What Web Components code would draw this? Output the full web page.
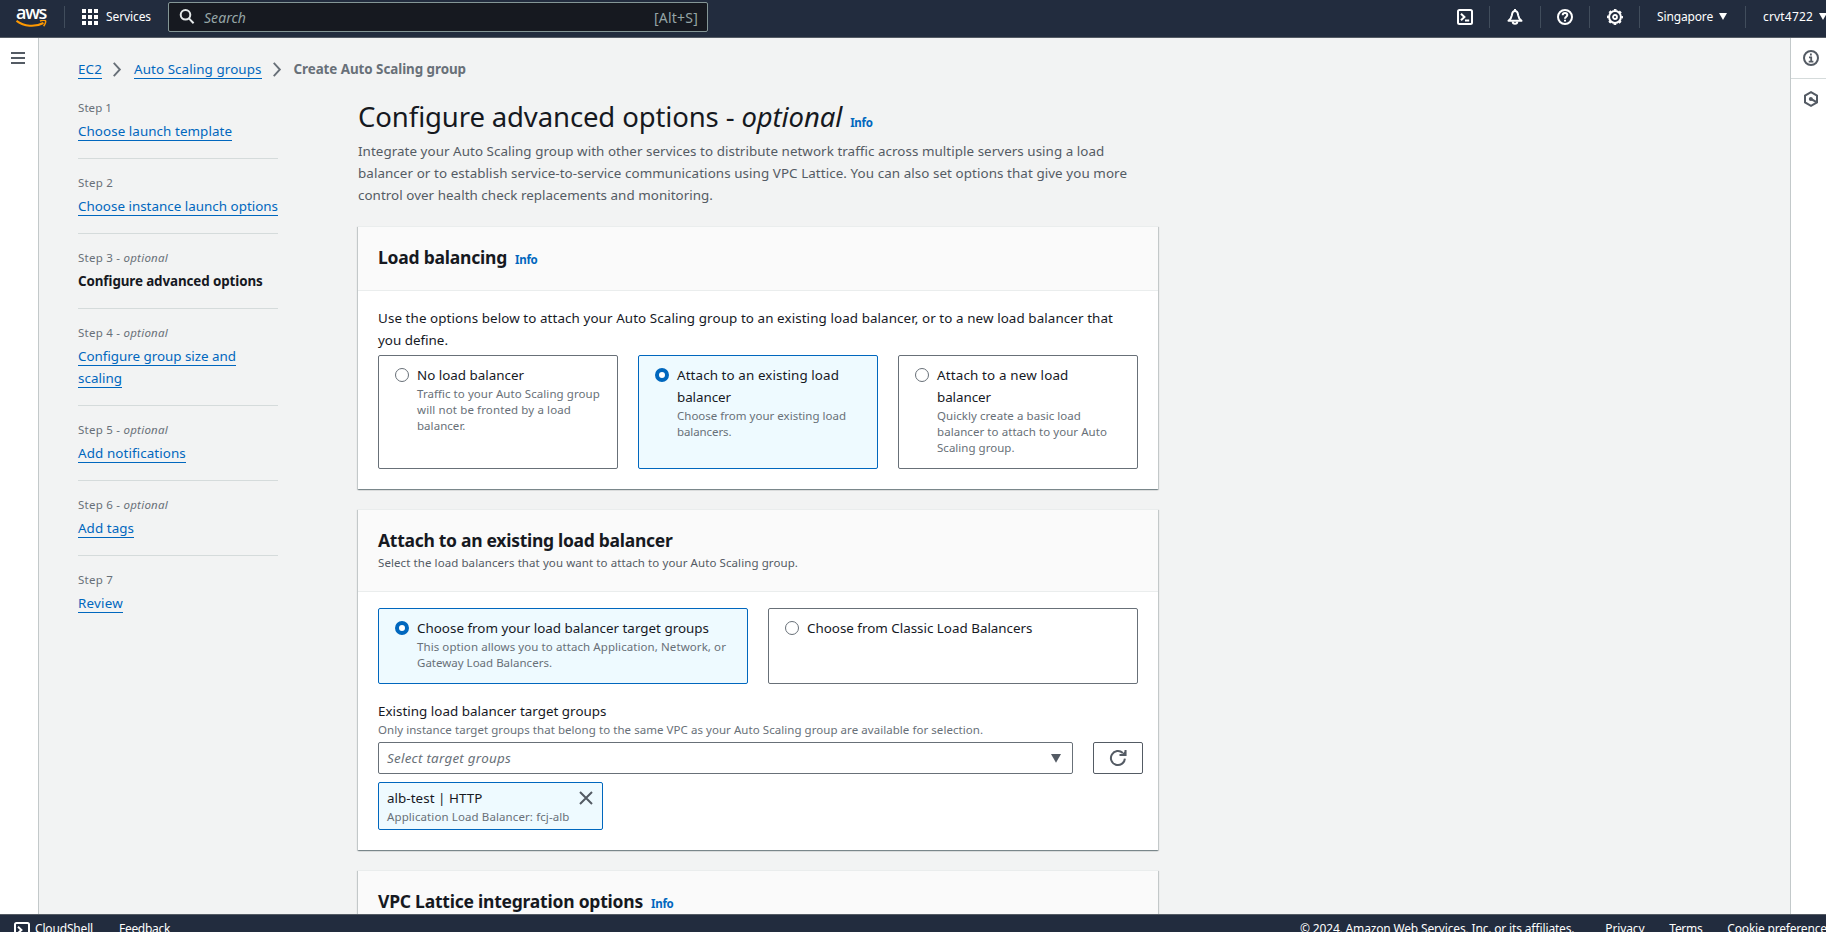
<!DOCTYPE html>
<html lang="en">
<head>
<meta charset="utf-8">
<title>Create Auto Scaling group | EC2</title>
<style>
html,body{margin:0;height:100%;overflow:hidden}
body{font:13.4px/22px "Noto Sans","Open Sans",sans-serif;color:#16191f;background:#f2f3f3;
--small:11.5px;--link:#0067be;--muted:#687078;--icon:#545b64;--tile:#eefaff}
</style>
</head>
<body>
<console-app></console-app>
<script>
const define = (name, html, hook) => {
  const t = document.createElement('template');
  t.innerHTML = html;
  customElements.define(name, class extends HTMLElement {
    connectedCallback() {
      if (this.shadowRoot) return;
      this.attachShadow({ mode: 'open' }).append(t.content.cloneNode(true));
      if (hook) hook(this, this.shadowRoot);
    }
  });
};

/* One line of text, tracked to an advance width given in pixels. */
define('text-line', `<style>
:host{display:block;white-space:nowrap;width:fit-content;flex:none;font-feature-settings:"liga" 1}
:host([link]){color:var(--link)}
:host([link]) span{box-shadow:0 -1px 0 var(--link) inset;display:inline-block;height:21px}
:host([info]){color:var(--link);font-size:var(--small);font-weight:700;line-height:16px}
</style><span><slot></slot></span>`, (el, root) => {
  const w = parseFloat(el.getAttribute('w'));
  if (!w) return;
  const span = root.querySelector('span');
  const natural = span.getBoundingClientRect().width;
  const n = el.textContent.length;
  if (natural) span.style.letterSpacing = ((w - natural) / n).toFixed(3) + 'px';
});

define('ui-icon', `<style>:host{display:block;flex:none;width:16px;height:16px}svg{display:block;width:100%;height:100%;overflow:visible;fill:none;stroke:currentColor;stroke-width:2}</style>`, (el, root) => {
  const shapes = {
    shell: '<rect x="1" y="1" width="14" height="14" rx="1.5"/><path d="M4 4.8 7.4 8 4 11.2M8 11.5h4.2"/>',
    bell: '<path d="M1.5 11.8C3.8 10 4.6 8.300 4.900 6.200 5.200 3.500 6.300 2 8 2s2.800 1.500 3.100 4.200c.3 2.100 1.100 3.800 3.400 5.600z" stroke-linejoin="round"/><path d="M5.700 12.500a2.300 2.300 0 0 0 4.600 0"/><path d="M8 0v2"/>',
    help: '<circle cx="8" cy="8" r="7"/><path d="M5.700 6.200C5.700 4.800 6.700 4 8 4s2.300.9 2.300 2.100C10.300 7.700 8 7.700 8 9.700"/><path d="M8 10.800v1.800"/>',
    gear: '<circle cx="8" cy="8" r="5.900"/><circle cx="8" cy="8" r="7.100" stroke-dasharray="2.600 2.977" stroke-dashoffset="1.300" stroke-width="1.800"/><circle cx="8" cy="8" r="2" stroke-width="1.800"/>',
    search: '<circle cx="6.500" cy="5.800" r="4.800"/><path d="m9.900 9.400 4.700 4.800"/>',
    grid: '<path fill="currentColor" stroke="none" d="M0 0h4v4H0zM6 0h4v4H6zM12 0h4v4h-4zM0 6h4v4H0zM6 6h4v4H6zM12 6h4v4h-4zM0 12h4v4H0zM6 12h4v4H6zM12 12h4v4h-4z"/>',
    menu: '<path d="M1 3h14M1 8h14M1 13h14"/>',
    info: '<circle cx="8" cy="8" r="7"/><path stroke-width="1.800" d="M7.900 3.600v2M6 7.300h2.200v4M5.700 11.700h4.700"/>',
    hex: '<path d="M8 1.200 14 4.600v6.800L8 14.800 2 11.400V4.600z"/><circle cx="7.800" cy="8" r="2" fill="currentColor" stroke="none"/><path d="m8 8 6 3.300"/>',
    caret: '<path fill="currentColor" stroke="none" d="M0 0h16L8 14z"/>',
    chevron: '<path d="m4 1 6.500 7L4 15"/>',
    refresh: '<path d="M14.900 8.600A7 7 0 1 1 12.800 3"/><path fill="currentColor" stroke="none" d="M16.100.200V6H10z"/><path d="M9.500 5h6V0"/>',
    close: '<path d="m2 2 12 12M14 2 2 14"/>'
  };
  root.innerHTML += `<svg viewBox="0 0 16 16">${shapes[el.getAttribute('name')]}</svg>`;
});

define('aws-logo', `<style>
:host{display:block;flex:none;width:31px;height:21px;color:#fff;font:600 18px/10px "Open Sans",sans-serif}
text-line{height:13px}
svg{display:block;width:31px;height:8px}
</style><text-line w="30">aws</text-line>
<svg viewBox="0 0 31 8" fill="none" stroke="#ff9900" stroke-width="2"><path d="M.5.800C8 6.500 19 7.500 27.500 3"/><path d="M24 1.100c2-.9 5.200-1 5.600-.2.300.9-.5 3.700-2 5.200" stroke-width="1.500"/></svg>`);

define('top-bar', `<style>
:host{display:flex;flex:none;align-items:center;box-sizing:border-box;height:38px;padding-bottom:3px;background:#222c3e;border-bottom:1px solid #545b64;color:#fff;font-size:12px;line-height:16px}
:host>*{flex:none}
aws-logo{margin:0 17px 0 16px}
i{width:1px;height:22px;background:#414d5c;flex:none}
.services{display:flex;gap:8px;box-sizing:border-box;width:103px;padding-left:17px;align-items:center}
.search{display:flex;align-items:center;box-sizing:border-box;width:540px;height:30px;border:1px solid #849696;border-radius:2px;background:#161920;padding:0 9px 0 10px;color:#95a5a6;font-size:14px}
.search ui-icon{color:#e5e9ea;margin-right:9px}
.search text-line{padding-top:1px}
.search em{flex:1}
.right{display:flex;margin-left:749px;align-items:center}
.right>*{flex:none}
.right ui-icon[name=caret]{width:8px;height:8px;margin-left:6px}
</style>
<aws-logo></aws-logo><i></i>
<div class="services"><ui-icon name="grid"></ui-icon><text-line w="45">Services</text-line></div>
<div class="search"><ui-icon name="search"></ui-icon><em><text-line w="42">Search</text-line></em><text-line w="44">[Alt+S]</text-line></div>
<div class="right">
<ui-icon name="shell"></ui-icon><i style="margin-left:16px"></i>
<ui-icon name="bell" style="margin-left:17px"></ui-icon><i style="margin-left:17px"></i>
<ui-icon name="help" style="margin-left:16px"></ui-icon><i style="margin-left:16px"></i>
<ui-icon name="gear" style="margin-left:17px"></ui-icon><i style="margin-left:16px"></i>
<text-line w="56" style="margin-left:17px">Singapore</text-line><ui-icon name="caret"></ui-icon><i style="margin-left:18px"></i>
<text-line w="50" style="margin-left:17px">crvt4722</text-line><ui-icon name="caret"></ui-icon>
</div>`);

define('bottom-bar', `<style>
:host{display:flex;flex:none;box-sizing:border-box;height:18px;overflow:hidden;background:#222c3e;border-top:1px solid #545b64;color:#fff;font-size:12px;line-height:16px;padding:6px 0 0 14px;white-space:nowrap}
ui-icon{margin:1px 5px 0 0}
</style>
<ui-icon name="shell"></ui-icon><text-line w="58">CloudShell</text-line><text-line w="51" style="margin-left:26px">Feedback</text-line>
<text-line w="274" style="margin-left:1130px">© 2024, Amazon Web Services, Inc. or its affiliates.</text-line>
<text-line w="39" style="margin-left:31px">Privacy</text-line><text-line w="33" style="margin-left:25px">Terms</text-line><text-line w="105" style="margin-left:25px">Cookie preferences</text-line>`);

define('side-rail', `<style>
:host{display:block;flex:none;box-sizing:border-box;background:#fff;color:var(--icon)}
:host([side=left]){width:39px;border-right:1px solid #c3c9ca}
:host([side=right]){width:36px;border-left:1px solid #c3c9ca}
</style><slot></slot>`);

define('bread-crumbs', `<style>
:host{display:flex;height:22px;color:var(--muted);font-weight:700;align-items:flex-start}
text-line[link]{font-weight:400}
ui-icon{width:15px;height:15px;margin:4px 9px 0 8px}
</style>
<text-line link w="24">EC2</text-line><ui-icon name="chevron"></ui-icon><text-line link w="127.500">Auto Scaling groups</text-line><ui-icon name="chevron"></ui-icon><text-line w="172.500">Create Auto Scaling group</text-line>`);

define('wizard-step', `<style>
:host{display:block;width:200px;padding:16px 0;border-bottom:1px solid #d5dbdb}
:host([last]){border:0}
.label{font-size:var(--small);line-height:16px;color:var(--muted);margin-bottom:4px;height:16px}
</style><div class="label"><slot name="label"></slot></div><slot></slot>`);

define('ui-card', `<style>
:host{display:block;box-sizing:border-box;width:800px;margin-bottom:20px;background:#fff;border-top:1px solid #eaeded;box-shadow:0 1px 1px 0 rgba(0,28,36,.3),1px 1px 1px 0 rgba(0,28,36,.15),-1px 1px 1px 0 rgba(0,28,36,.15)}
header{box-sizing:border-box;background:#fafafa;border-bottom:1px solid #eaeded;padding:19px 20px 0;height:var(--head,64px)}
.title{display:flex;gap:8px;align-items:baseline;font-size:17.5px;font-weight:700;line-height:22px}
.sub{font-size:var(--small);line-height:16px;color:var(--icon);margin-top:4px}
.body{padding:16px 20px 20px}
</style><header><div class="title"><slot name="title"></slot></div><div class="sub"><slot name="sub"></slot></div></header><div class="body"><slot></slot></div>`);

define('tile-row', `<style>:host{display:grid;grid-auto-flow:column;grid-auto-columns:1fr;gap:20px}</style><slot></slot>`);

define('radio-tile', `<style>
:host{display:flex;gap:8px;box-sizing:border-box;border:1px solid var(--muted);border-radius:2px;padding:8px 12px 12px 16px}
:host([checked]){border-color:var(--link);background:var(--tile)}
.dot{box-sizing:border-box;width:14px;height:14px;border-radius:50%;border:1px solid #687078;margin-top:4px;flex:none;background:#fff}
:host([checked]) .dot{border:4px solid var(--link)}
.desc{font-size:var(--small);line-height:16px;color:var(--muted)}
</style><div class="dot"></div><div><slot></slot><div class="desc"><slot name="desc"></slot></div></div>`);

define('target-select', `<style>
:host{display:flex;gap:20px}
.field,.btn{display:flex;flex:none;box-sizing:border-box;height:32px;border:1px solid var(--muted);border-radius:2px;align-items:center}
.field{width:695px;justify-content:space-between;padding:0 11px 0 8px;font-style:italic;color:var(--muted)}
.field ui-icon{width:10px;height:10px;color:var(--icon);margin-top:1px}
.btn{width:50px;justify-content:center;border-color:var(--icon);color:var(--icon)}
</style><div class="field"><slot></slot><ui-icon name="caret"></ui-icon></div><div class="btn"><ui-icon name="refresh"></ui-icon></div>`);

define('ui-token', `<style>
:host{display:flex;justify-content:space-between;box-sizing:border-box;width:225px;height:48px;margin-top:8px;border:1px solid var(--link);border-radius:2px;background:var(--tile);padding:4px 8px}
.d{font-size:var(--small);line-height:16px;color:var(--muted)}
ui-icon{color:var(--icon);margin-top:3px}
</style><div><slot></slot><div class="d"><slot name="desc"></slot></div></div><ui-icon name="close"></ui-icon>`);

define('console-app', `<style>
:host{display:flex;flex-direction:column;height:932px;width:1826px;overflow:hidden}
.mid{flex:1;display:flex;min-height:0}
main{flex:1;overflow:hidden;padding:20px 0 0 39px}
.cols{display:grid;grid-template-columns:200px 800px;gap:80px}
nav{padding-top:4px}
h1{margin:18px 0 0;font-size:27.5px;line-height:38px;height:38px;font-weight:400;display:flex;align-items:baseline;gap:8px}
.intro{color:var(--icon);margin:4px 0 20px}
.hint{font-size:var(--small);line-height:16px;color:var(--muted);margin-bottom:4px}
.tools{height:41px;border-bottom:1px solid #d5dbdb;padding:12px 0 0 12px;box-sizing:border-box}
</style>
<top-bar></top-bar>
<div class="mid">
<side-rail side="left"><ui-icon name="menu" style="margin:12px 0 0 10px"></ui-icon></side-rail>
<main>
<bread-crumbs></bread-crumbs>
<div class="cols">
<nav>
<wizard-step><text-line slot="label" w="34">Step 1</text-line><text-line link w="154">Choose launch template</text-line></wizard-step>
<wizard-step><text-line slot="label" w="35">Step 2</text-line><text-line link w="200">Choose instance launch options</text-line></wizard-step>
<wizard-step><text-line slot="label" w="90">Step 3 - <em>optional</em></text-line><text-line w="184.500" style="font-weight:700">Configure advanced options</text-line></wizard-step>
<wizard-step><text-line slot="label" w="90">Step 4 - <em>optional</em></text-line><text-line link w="158">Configure group size and</text-line><text-line link w="44">scaling</text-line></wizard-step>
<wizard-step><text-line slot="label" w="90">Step 5 - <em>optional</em></text-line><text-line link w="108">Add notifications</text-line></wizard-step>
<wizard-step><text-line slot="label" w="90">Step 6 - <em>optional</em></text-line><text-line link w="56">Add tags</text-line></wizard-step>
<wizard-step last><text-line slot="label" w="35">Step 7</text-line><text-line link w="45">Review</text-line></wizard-step>
</nav>
<section>
<h1><text-line w="484">Configure advanced options - <em>optional</em></text-line><text-line info w="22.500">Info</text-line></h1>
<div class="intro"><text-line w="746.500">Integrate your Auto Scaling group with other services to distribute network traffic across multiple servers using a load</text-line><text-line w="769">balancer or to establish service-to-service communications using VPC Lattice. You can also set options that give you more</text-line><text-line w="355">control over health check replacements and monitoring.</text-line></div>
<ui-card>
<text-line slot="title" w="129">Load balancing</text-line><text-line slot="title" info w="22.500">Info</text-line>
<text-line w="735">Use the options below to attach your Auto Scaling group to an existing load balancer, or to a new load balancer that</text-line><text-line w="70" style="margin-bottom:4px">you define.</text-line>
<tile-row>
<radio-tile><text-line w="107">No load balancer</text-line><text-line slot="desc" w="183">Traffic to your Auto Scaling group</text-line><text-line slot="desc" w="154">will not be fronted by a load</text-line><text-line slot="desc" w="48.500">balancer.</text-line></radio-tile>
<radio-tile checked><text-line w="162">Attach to an existing load</text-line><text-line w="54">balancer</text-line><text-line slot="desc" w="169">Choose from your existing load</text-line><text-line slot="desc" w="54.500">balancers.</text-line></radio-tile>
<radio-tile><text-line w="131.500">Attach to a new load</text-line><text-line w="54">balancer</text-line><text-line slot="desc" w="144">Quickly create a basic load</text-line><text-line slot="desc" w="170">balancer to attach to your Auto</text-line><text-line slot="desc" w="77.500">Scaling group.</text-line></radio-tile>
</tile-row>
</ui-card>
<ui-card style="--head:82px">
<text-line slot="title" w="294.500">Attach to an existing load balancer</text-line>
<text-line slot="sub" w="420">Select the load balancers that you want to attach to your Auto Scaling group.</text-line>
<tile-row style="margin-bottom:16px">
<radio-tile checked><text-line w="292">Choose from your load balancer target groups</text-line><text-line slot="desc" w="309">This option allows you to attach Application, Network, or</text-line><text-line slot="desc" w="135">Gateway Load Balancers.</text-line></radio-tile>
<radio-tile><text-line w="225.500">Choose from Classic Load Balancers</text-line></radio-tile>
</tile-row>
<text-line w="228.500">Existing load balancer target groups</text-line>
<div class="hint"><text-line w="605">Only instance target groups that belong to the same VPC as your Auto Scaling group are available for selection.</text-line></div>
<target-select><text-line w="124">Select target groups</text-line></target-select>
<ui-token><text-line w="95.500">alb-test | HTTP</text-line><text-line slot="desc" w="182.500">Application Load Balancer: fcj-alb</text-line></ui-token>
</ui-card>
<ui-card><text-line slot="title" w="265">VPC Lattice integration options</text-line><text-line slot="title" info w="22.500">Info</text-line></ui-card>
</section>
</div>
</main>
<side-rail side="right"><div class="tools"><ui-icon name="info"></ui-icon></div><ui-icon name="hex" style="margin:12px 0 0 12px"></ui-icon></side-rail>
</div>
<bottom-bar></bottom-bar>`);
</script>
</body>
</html>
